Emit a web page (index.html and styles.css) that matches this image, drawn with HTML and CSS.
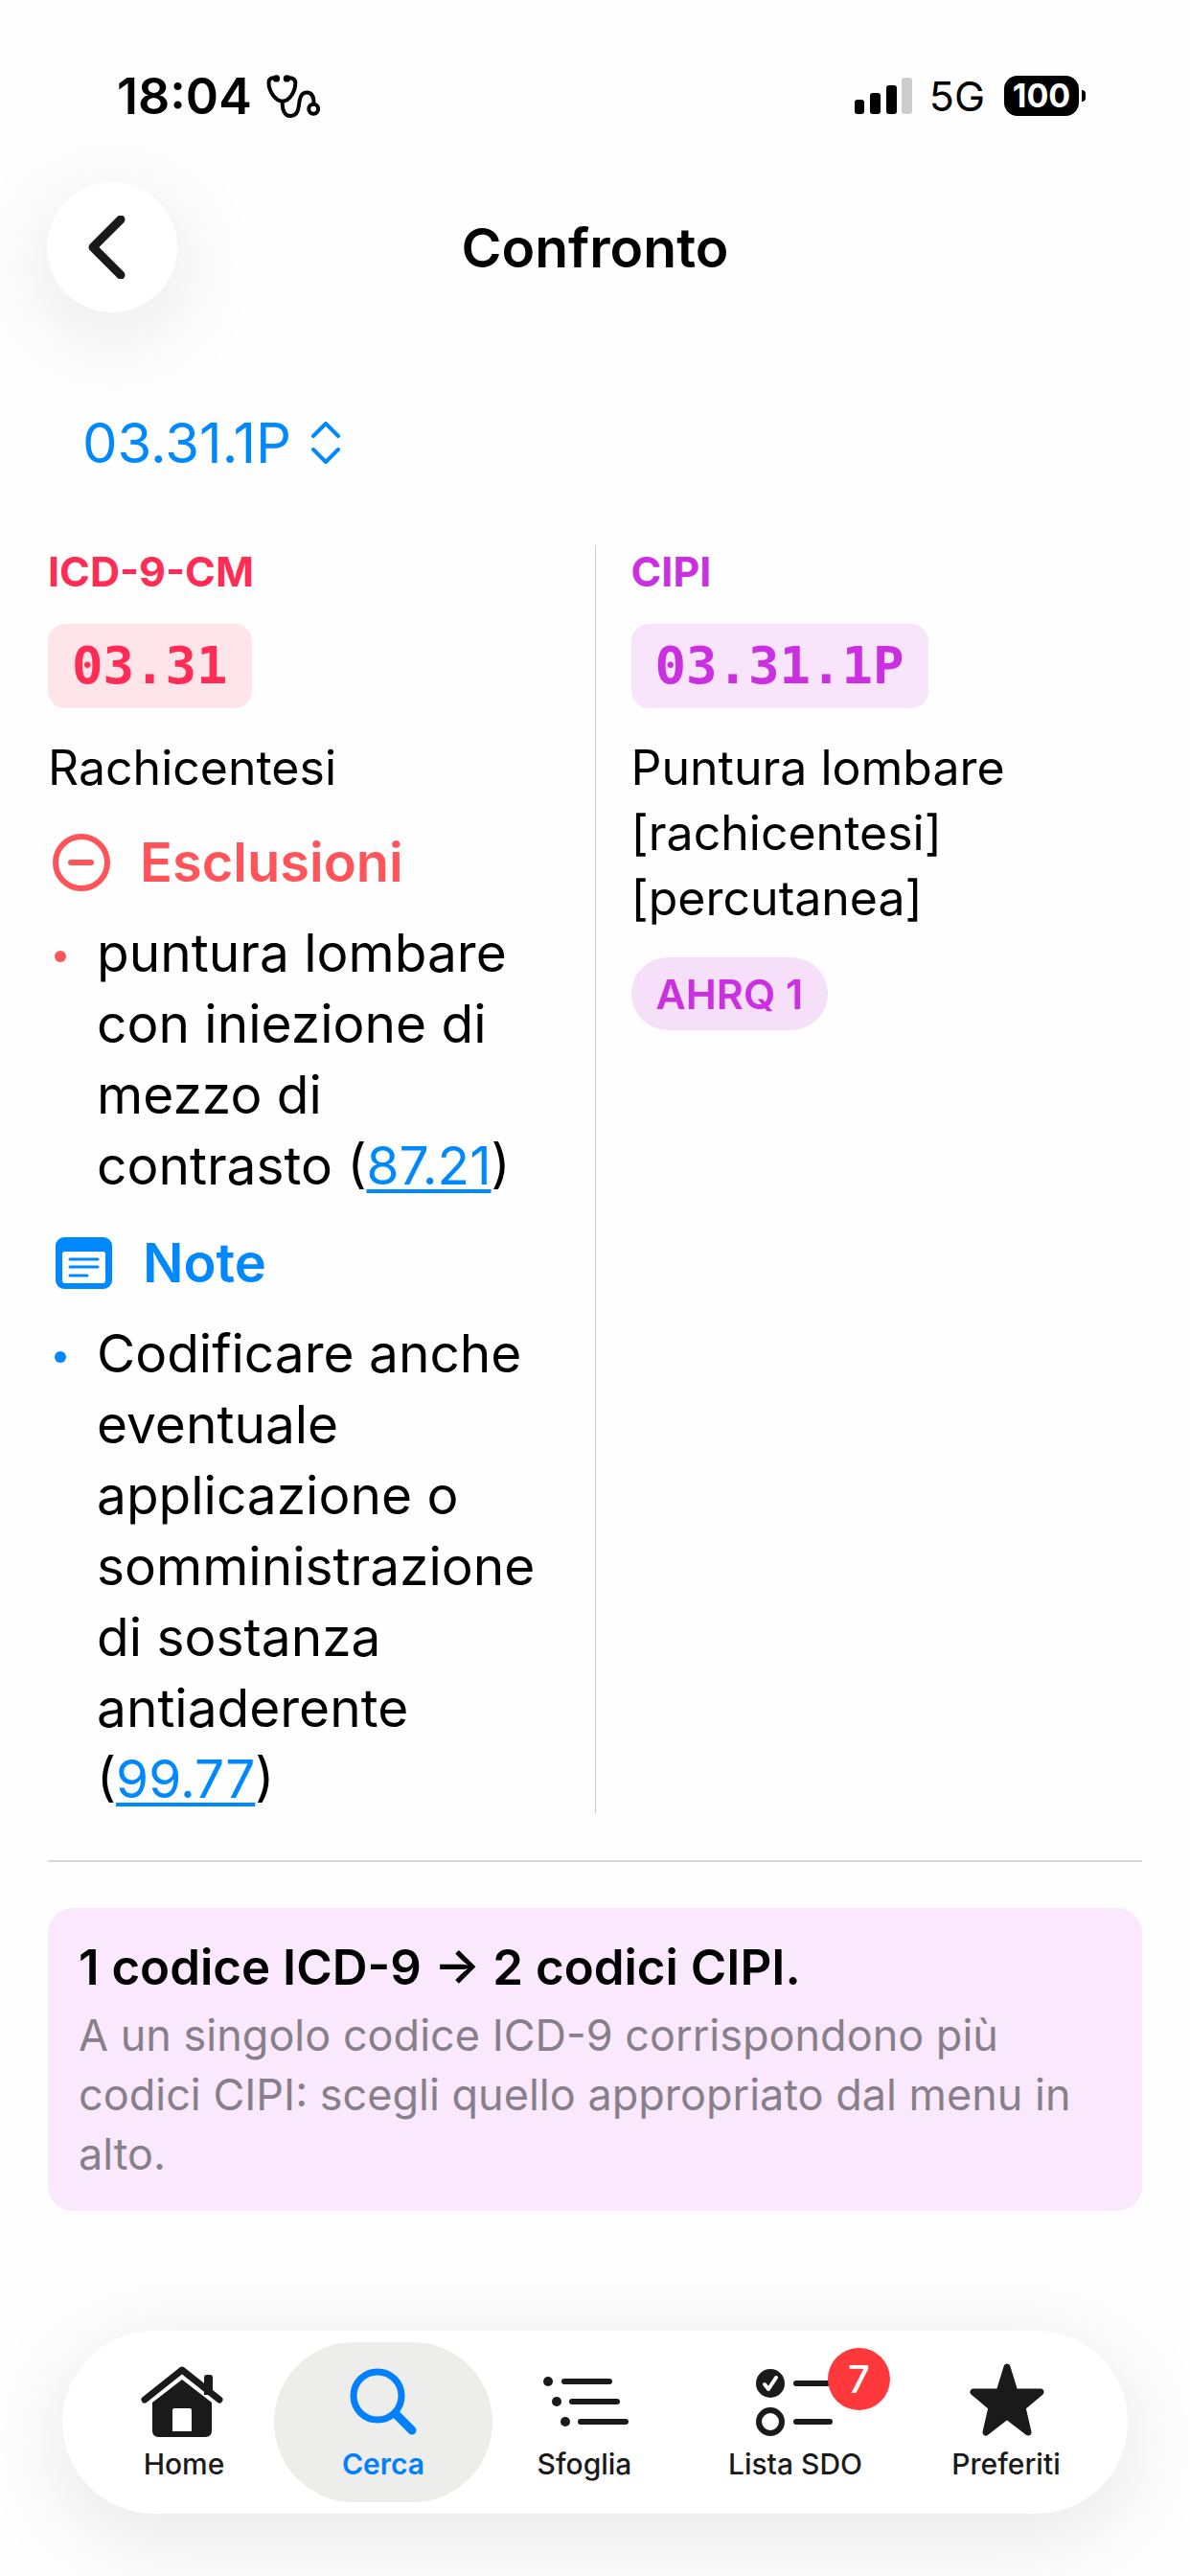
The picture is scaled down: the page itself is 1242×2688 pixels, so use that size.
FILE: index.html
```html
<!DOCTYPE html>
<html lang="it">
<head>
    <meta charset="UTF-8">
    <meta name="viewport" content="width=device-width, initial-scale=1.0">
    <title>Confronto</title>
    <link rel="stylesheet" href="styles.css">
</head>
<body>
    <div class="status">
        <div class="status-left">
            <span class="time">18:04</span>
            <svg class="stethoscope" viewBox="828 80 174 142">
                <g fill="none" stroke="#000" stroke-width="12" stroke-linecap="round">
                    <path d="M862 93C845 91 838 97 838 108C838 135 858 165 881 167C905 165 922 135 922 108C922 97 912 91 896 93"/>
                    <path d="M881 167C880 195 888 213 906 213C930 213 932 190 935 165C938 148 945 139 957 139C972 139 980 150 980 172"/>
                    <circle cx="979" cy="191" r="15"/>
                </g>
                <circle cx="862" cy="95" r="11"/>
                <circle cx="895" cy="95" r="11"/>
            </svg>
        </div>
        <div class="status-right">
            <svg class="signal" viewBox="0 0 60 38">
                <rect x="0" y="23" width="10" height="15" rx="3"/>
                <rect x="16" y="16" width="11" height="22" rx="3"/>
                <rect x="33" y="8" width="11" height="30" rx="3"/>
                <rect x="49" y="0" width="11" height="38" rx="3" fill="#ccc"/>
            </svg>
            <span class="network">5G</span>
            <span class="battery">100</span>
        </div>
    </div>

    <header>
        <button class="back" aria-label="Indietro">
            <svg viewBox="0 0 40 66">
                <path d="M34 4L5 33L34 62" fill="none" stroke="#1a1a1a" stroke-width="9" stroke-linecap="round" stroke-linejoin="round"/>
            </svg>
        </button>
        <h1>Confronto</h1>
    </header>

    <main>
        <div class="picker">
            <select aria-label="Codice CIPI">
                <option>03.31.1P</option>
            </select>
            <svg viewBox="0 0 30 44">
                <path d="M2 15L15 2L28 15M2 29L15 42L28 29" fill="none" stroke="#0088ff" stroke-width="4" stroke-linecap="round" stroke-linejoin="round"/>
            </svg>
        </div>

        <div class="compare">
            <div class="column icd">
                <h2>ICD-9-CM</h2>
                <span class="code">03.31</span>
                <p>Rachicentesi</p>

                <section class="exclusions">
                    <h3>
                        <svg width="60" height="60" viewBox="0 0 60 60" fill="none" stroke="currentColor" stroke-width="6" stroke-linecap="round">
                            <circle cx="30" cy="30" r="27"/>
                            <path d="M19 30H40"/>
                        </svg>
                        Esclusioni
                    </h3>
                    <ul>
                        <li><span>puntura lombare con iniezione di mezzo di contrasto (<a href="#">87.21</a>)</span></li>
                    </ul>
                </section>

                <section class="notes">
                    <h3>
                        <svg width="63" height="54" viewBox="-3 0 63 54">
                            <rect width="59" height="54" rx="9" fill="currentColor"/>
                            <rect x="7" y="15" width="45" height="33" rx="3" fill="#fff"/>
                            <path d="M15 23H44M15 31H44M15 40H33" stroke="currentColor" stroke-width="3" stroke-linecap="round"/>
                        </svg>
                        Note
                    </h3>
                    <ul>
                        <li><span>Codificare anche eventuale applicazione o somministrazione di sostanza antiaderente (<a href="#">99.77</a>)</span></li>
                    </ul>
                </section>
            </div>

            <div class="divider"></div>

            <div class="column cipi">
                <h2>CIPI</h2>
                <span class="code">03.31.1P</span>
                <p>Puntura lombare [rachicentesi] [percutanea]</p>
                <span class="tag">AHRQ 1</span>
            </div>
        </div>

        <hr>

        <div class="info">
            <strong>1 codice ICD-9 → 2 codici CIPI.</strong>
            <p>A un singolo codice ICD-9 corrispondono più codici CIPI: scegli quello appropriato dal menu in alto.</p>
        </div>
    </main>

    <nav>
        <a href="#" class="tab">
            <svg viewBox="0 0 100 84">
                <path d="M9 39L48 8L87 39" fill="none" stroke="currentColor" stroke-width="7" stroke-linecap="round" stroke-linejoin="round"/>
                <path d="M71 34V16Q71 13 74 13H77Q80 13 80 16V34Z"/>
                <path fill-rule="evenodd" d="M48 18L79 42V71Q79 78 72 78H24Q17 78 17 71V42ZM40 48Q38 48 38 50V72H58V50Q58 48 56 48Z"/>
            </svg>
            Home
        </a>
        <a href="#" class="tab active">
            <svg viewBox="0 0 100 84" fill="none" stroke="currentColor" stroke-linecap="round">
                <circle cx="44" cy="35" r="25" stroke-width="7"/>
                <path d="M64 55L80 71" stroke-width="9"/>
            </svg>
            Cerca
        </a>
        <a href="#" class="tab">
            <svg viewBox="0 0 100 84">
                <circle cx="12" cy="20" r="5"/>
                <circle cx="21" cy="41" r="5"/>
                <circle cx="30" cy="62" r="5"/>
                <path d="M29 20H76M37 41H84M46 62H93" stroke="currentColor" stroke-width="6" stroke-linecap="round"/>
            </svg>
            Sfoglia
        </a>
        <a href="#" class="tab">
            <svg viewBox="0 0 100 84">
                <circle cx="24" cy="22" r="15"/>
                <path d="M18 23L22 28L30 16" fill="none" stroke="#fff" stroke-width="4" stroke-linecap="round" stroke-linejoin="round"/>
                <circle cx="24" cy="62" r="12" fill="none" stroke="currentColor" stroke-width="6"/>
                <path d="M51 22H86M51 62H86" stroke="currentColor" stroke-width="6" stroke-linecap="round"/>
            </svg>
            Lista SDO
            <span class="count">7</span>
        </a>
        <a href="#" class="tab">
            <svg viewBox="0 0 100 84">
                <path d="M51 5L59 31H86L67 47L73 73L51 56L29 73L35 47L16 31H43Z" stroke="currentColor" stroke-width="7" stroke-linejoin="round"/>
            </svg>
            Preferiti
        </a>
    </nav>
</body>
</html>
```

FILE: styles.css
```css
* {
    padding: 0;
    margin: 0;
    box-sizing: border-box;
}

body {
    background: #fefefe;
    color: #000;
    font-family: Inter, "Liberation Sans", sans-serif;
    min-height: 100vh;
    display: flex;
    flex-direction: column;
}

.status {
    display: flex;
    justify-content: space-between;
    padding: 72px 116px 0 122px;
}

.status-left,
.status-right {
    display: flex;
    align-items: center;
    height: 56px;
}

.time {
    font-size: 52px;
    font-weight: 600;
}

.stethoscope {
    width: 58px;
    height: 47px;
    margin-left: 14px;
}

.signal {
    width: 60px;
    height: 38px;
    margin-right: 18px;
}

.network {
    font-size: 43px;
    margin-right: 20px;
}

.battery {
    position: relative;
    width: 78px;
    height: 42px;
    line-height: 42px;
    border-radius: 14px;
    background: #000;
    color: #fff;
    font-size: 34px;
    font-weight: 700;
    text-align: center;
}

.battery::after {
    content: "";
    position: absolute;
    left: 81px;
    top: 15px;
    width: 4px;
    height: 12px;
    border-radius: 0 4px 4px 0;
    background: #000;
}

header {
    display: grid;
    grid-template-columns: 136px 1fr 136px;
    align-items: center;
    margin-top: 62px;
    padding: 0 49px;
}

h1 {
    font-size: 57px;
    font-weight: 600;
    text-align: center;
}

.back {
    width: 136px;
    height: 136px;
    border: none;
    border-radius: 50%;
    background: #fff;
    box-shadow: 0 20px 100px rgba(0, 0, 0, .1);
    cursor: pointer;
}

.back svg {
    width: 40px;
    height: 66px;
    margin-right: 10px;
    display: inline-block;
    vertical-align: middle;
}

main {
    padding: 99px 50px 0;
}

.picker {
    display: flex;
    align-items: center;
    gap: 20px;
    padding-left: 36px;
}

select {
    appearance: none;
    border: none;
    background: none;
    color: #0088ff;
    font-family: inherit;
    font-size: 58px;
    line-height: 74px;
}

.picker svg {
    width: 30px;
    height: 44px;
}

.compare {
    display: grid;
    grid-template-columns: 1fr 1px 1fr;
    gap: 37px;
    margin-top: 70px;
}

.divider {
    background: #ccc;
}

.column {
    display: flex;
    flex-direction: column;
    align-items: flex-start;
    gap: 28px;
}

h2 {
    font-size: 43px;
    line-height: 54px;
    font-weight: 700;
}

.icd h2,
.icd .code {
    color: #ff2d55;
}

.cipi h2,
.cipi .code,
.tag {
    color: #cb30e0;
}

.code {
    padding: 0 25px;
    border-radius: 18px;
    font-family: "DejaVu Sans Mono", "Liberation Mono", monospace;
    font-size: 54px;
    line-height: 88px;
    font-weight: 700;
}

.icd .code {
    background: #ffe5e9;
}

.cipi .code {
    background: #f8e5fb;
}

.column p {
    font-size: 50px;
    line-height: 68px;
}

.tag {
    padding: 0 26px;
    border-radius: 38px;
    background: #f6dff9;
    font-size: 43px;
    line-height: 76px;
    font-weight: 600;
}

h3 {
    display: flex;
    align-items: center;
    gap: 31px;
    padding-left: 5px;
    color: var(--accent);
    font-size: 56px;
    line-height: 74px;
    font-weight: 600;
}

.exclusions {
    --accent: #ff5459;
}

.notes {
    --accent: #0088ff;
}

ul {
    margin-top: 20px;
    list-style: none;
}

li {
    display: flex;
    gap: 32px;
    padding-left: 7px;
    font-size: 55px;
    line-height: 74px;
}

li::before {
    content: "";
    flex: none;
    width: 12px;
    height: 12px;
    margin-top: 35px;
    border-radius: 50%;
    background: var(--accent);
}

li a {
    color: #0088ff;
    text-decoration-thickness: 4px;
    text-underline-offset: 5px;
}

hr {
    margin: 48px 0;
    border: none;
    border-top: 2px solid #d8d8d8;
}

.info {
    padding: 28px 32px;
    border-radius: 26px;
    background: #fae9fc;
}

.info strong {
    display: block;
    font-size: 51px;
    line-height: 68px;
    font-weight: 600;
}

.info p {
    margin-top: 6px;
    color: #87808a;
    font-size: 45px;
    line-height: 62px;
}

nav {
    display: grid;
    grid-template-columns: minmax(0, 208fr) minmax(0, 210fr) minmax(0, 220fr) minmax(0, 220fr) minmax(0, 228fr);
    margin: auto 65px 65px;
    padding: 12px 13px;
    border-radius: 96px;
    background: #fff;
    box-shadow: 0 20px 100px rgba(0, 0, 0, .1);
}

/* tabs are wider than their track so the active pill can overlap its neighbours */
.tab {
    position: relative;
    width: 228px;
    height: 167px;
    padding-top: 21px;
    border-radius: 84px;
    color: #1a1a1a;
    font-size: 30px;
    line-height: 36px;
    font-weight: 500;
    text-align: center;
    text-decoration: none;
}

.tab svg {
    display: block;
    width: 100px;
    height: 84px;
    margin: 0 auto 4px;
    fill: currentColor;
}

.tab svg[fill="none"] {
    fill: none;
}

.tab.active {
    background: #ededeb;
    color: #0080ff;
    font-weight: 600;
}

.count {
    position: absolute;
    left: 148px;
    top: 6px;
    width: 65px;
    height: 65px;
    border-radius: 50%;
    background: #ff383c;
    color: #fff;
    font-size: 40px;
    line-height: 65px;
}
```
